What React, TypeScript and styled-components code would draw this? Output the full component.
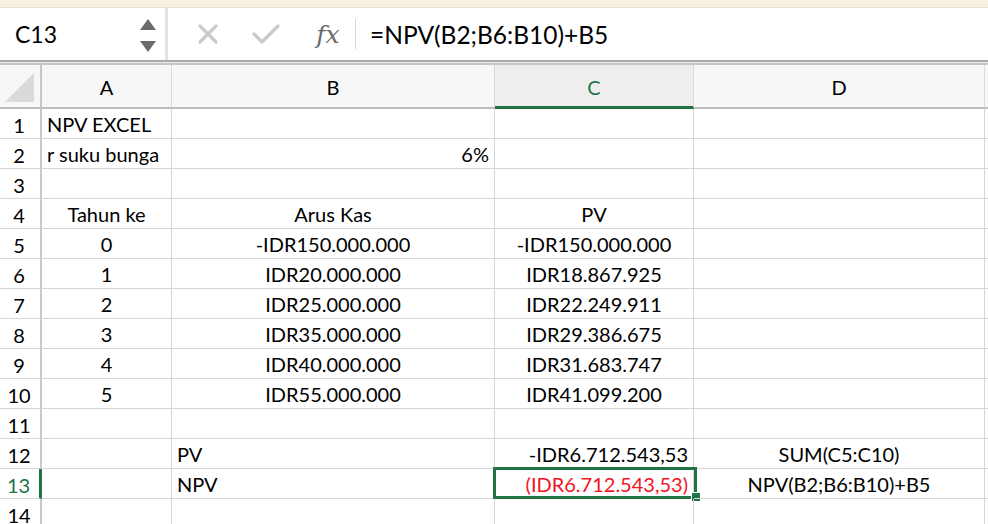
import styled, { createGlobalStyle } from 'styled-components';

const GlobalStyle = createGlobalStyle`
  html, body {
    margin: 0;
    padding: 0;
    background: #ffffff;
    overflow: hidden;
  }
  body {
    font-family: Lato, "Open Sans", sans-serif;
  }
`

const Page = styled.div`
  width: 988px;
  height: 524px;
  overflow: hidden;
  background: #ffffff;
`

const TopStrip = styled.div`
  height: 7px;
  background: #f7efdf;
  border-bottom: 1px solid #e4e0d8;
`

const FormulaBar = styled.div`
  display: flex;
  align-items: center;
  height: 52px;
  background: #ffffff;
`

const NameBox = styled.div`
  box-sizing: border-box;
  display: flex;
  align-items: center;
  justify-content: space-between;
  width: 168px;
  height: 100%;
  padding: 0 9px 0 15px;
  border-right: 3px solid #e2e2e2;
  font-size: 23px;
  color: #000;
`

const Spinner = styled.div`
  display: flex;
  flex-direction: column;
  gap: 11px;
  padding-top: 2px;
`

const IconRow = styled.div`
  display: flex;
  align-items: center;
  height: 100%;
  padding-left: 12px;
`

const IconSlot = styled.div<{ $w: number; $gap?: number }>`
  display: flex;
  align-items: center;
  justify-content: center;
  width: ${p => p.$w}px;
  margin-left: ${p => p.$gap || 0}px;
`

const Fx = styled.span`
  font-family: "DejaVu Serif", "Liberation Serif", serif;
  font-style: italic;
  font-size: 25px;
  color: #6a6a6a;
  margin-left: 2px;
`

const Divider = styled.div`
  width: 1px;
  height: 30px;
  background: #d6d6d6;
  margin: 0 14px 0 11px;
`

const FormulaText = styled.div`
  font-size: 24.5px;
  color: #000;
`

const Separator = styled.div`
  height: 5px;
  background: linear-gradient(#a9a9a9 0 2px, #ececec 2px 3px, #c6c6c6 3px 5px);
`

const Grid = styled.div`
  display: grid;
  grid-template-columns: 42px 130px 323px 199px 291px 1fr;
  grid-template-rows: 44px;
  grid-auto-rows: 30px;
`

const Corner = styled.div`
  background: #f7f7f7;
  border-right: 2px solid #c8c8c8;
  border-bottom: 2px solid #bdbdbd;
  box-sizing: border-box;
  display: flex;
  align-items: flex-end;
  justify-content: flex-end;
  padding: 0 6px 5px 0;
`

const ColHead = styled.div<{ $active?: boolean }>`
  box-sizing: border-box;
  display: flex;
  align-items: center;
  justify-content: center;
  padding-top: 2px;
  font-size: 20px;
  background: ${p => (p.$active ? '#eeeeee' : '#f7f7f7')};
  color: ${p => (p.$active ? '#217346' : '#000')};
  border-right: 1px solid #dcdcdc;
  border-bottom: ${p => (p.$active ? '3px solid #217346' : '2px solid #bdbdbd')};
`

const RowHead = styled.div<{ $active?: boolean }>`
  box-sizing: border-box;
  display: flex;
  align-items: center;
  justify-content: center;
  padding: 2px 2px 0 0;
  font-size: 20px;
  background: #ffffff;
  color: ${p => (p.$active ? '#217346' : '#000')};
  border-right: ${p => (p.$active ? '3px solid #217346' : '2px solid #c8c8c8')};
  border-bottom: 1px solid #d6d6d6;
`

type Align = 'left' | 'center' | 'right';

const Cell = styled.div<{ $align: Align; $color?: string }>`
  position: relative;
  box-sizing: border-box;
  display: flex;
  align-items: center;
  justify-content: ${p => (p.$align === 'left' ? 'flex-start' : p.$align === 'right' ? 'flex-end' : 'center')};
  padding: 1px 5px 0 5px;
  font-size: 20px;
  white-space: nowrap;
  color: ${p => p.$color || '#000'};
  border-right: 1px solid #d6d6d6;
  border-bottom: 1px solid #d6d6d6;
`

const Selection = styled.div`
  position: absolute;
  left: -2px;
  top: -2px;
  right: -4px;
  bottom: -1px;
  border: 3px solid #217346;
  pointer-events: none;
`

const Handle = styled.div`
  position: absolute;
  right: -7px;
  bottom: -6px;
  width: 8px;
  height: 8px;
  background: #217346;
  border: 1px solid #ffffff;
`

type CellData = { v: string; a: Align; c?: string; sel?: boolean };

const e = (): CellData => ({ v: '', a: 'left' });
const L = (v: string): CellData => ({ v, a: 'left' });
const C = (v: string): CellData => ({ v, a: 'center' });
const R = (v: string, c?: string, sel?: boolean): CellData => ({ v, a: 'right', c, sel });

const rows: CellData[][] = [
  [L('NPV EXCEL'), e(), e(), e(), e()],
  [L('r suku bunga'), R('6%'), e(), e(), e()],
  [e(), e(), e(), e(), e()],
  [C('Tahun ke'), C('Arus Kas'), C('PV'), e(), e()],
  [C('0'), C('-IDR150.000.000'), C('-IDR150.000.000'), e(), e()],
  [C('1'), C('IDR20.000.000'), C('IDR18.867.925'), e(), e()],
  [C('2'), C('IDR25.000.000'), C('IDR22.249.911'), e(), e()],
  [C('3'), C('IDR35.000.000'), C('IDR29.386.675'), e(), e()],
  [C('4'), C('IDR40.000.000'), C('IDR31.683.747'), e(), e()],
  [C('5'), C('IDR55.000.000'), C('IDR41.099.200'), e(), e()],
  [e(), e(), e(), e(), e()],
  [e(), L('PV'), R('-IDR6.712.543,53'), C('SUM(C5:C10)'), e()],
  [e(), L('NPV'), R('(IDR6.712.543,53)', '#f0141e', true), C('NPV(B2;B6:B10)+B5'), e()],
  [e(), e(), e(), e(), e()],
];

function App() {
  return (
    <Page>
      <GlobalStyle />
      <TopStrip />
      <FormulaBar>
        <NameBox>
          <span>C13</span>
          <Spinner>
            <svg width="16" height="11" viewBox="0 0 16 11"><path d="M8 0 L16 11 L0 11 Z" fill="#6b6b6b" /></svg>
            <svg width="16" height="11" viewBox="0 0 16 11"><path d="M0 0 L16 0 L8 11 Z" fill="#6b6b6b" /></svg>
          </Spinner>
        </NameBox>
        <IconRow>
          <IconSlot $w={55}>
            <svg width="22" height="22" viewBox="0 0 22 22">
              <path d="M3 3 L19 19 M19 3 L3 19" stroke="#cacaca" strokeWidth="3.2" strokeLinecap="round" />
            </svg>
          </IconSlot>
          <IconSlot $w={62}>
            <svg width="28" height="22" viewBox="0 0 28 22">
              <path d="M2 11 L10 19 L26 3" stroke="#cacaca" strokeWidth="3.2" fill="none" strokeLinecap="round" strokeLinejoin="round" />
            </svg>
          </IconSlot>
          <IconSlot $w={34} $gap={13}>
            <Fx>fx</Fx>
          </IconSlot>
          <Divider />
        </IconRow>
        <FormulaText>=NPV(B2;B6:B10)+B5</FormulaText>
      </FormulaBar>
      <Separator />
      <Grid>
        <Corner>
          <svg width="29" height="29" viewBox="0 0 29 29"><path d="M29 0 L29 29 L0 29 Z" fill="#dadada" /></svg>
        </Corner>
        {['A', 'B', 'C', 'D', ''].map(h => (
          <ColHead key={h || 'E'} $active={h === 'C'}>{h}</ColHead>
        ))}
        {rows.map((row, i) => (
          <Row key={i} n={i + 1} cells={row} />
        ))}
      </Grid>
    </Page>
  );
}

function Row({ n, cells }: { n: number; cells: CellData[] }) {
  return (
    <>
      <RowHead $active={n === 13}>{n}</RowHead>
      {cells.map((c, j) => (
        <Cell key={j} $align={c.a} $color={c.c}>
          {c.v}
          {c.sel && (
            <Selection>
              <Handle />
            </Selection>
          )}
        </Cell>
      ))}
    </>
  );
}

export default App;
